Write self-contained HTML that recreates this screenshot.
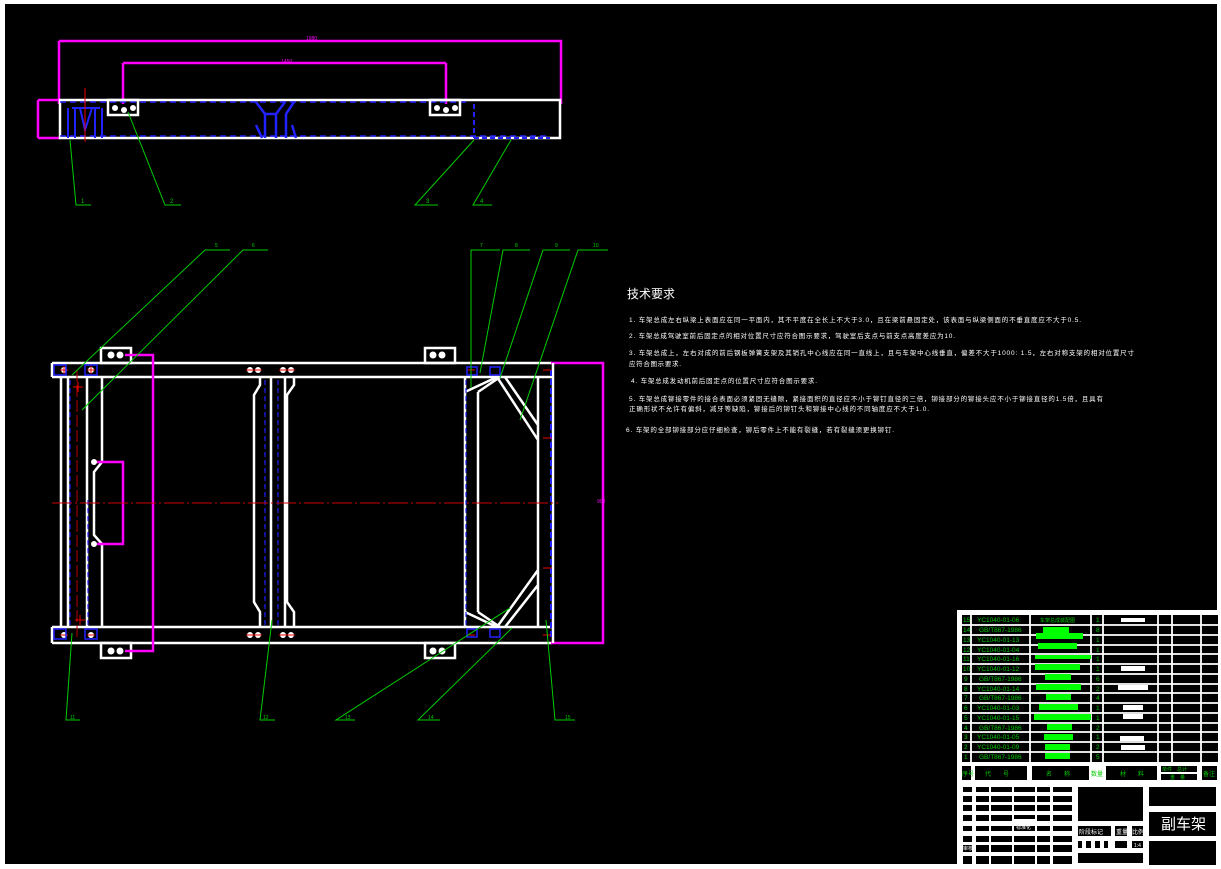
<!DOCTYPE html>
<html><head><meta charset="utf-8"><style>
html,body{margin:0;padding:0;background:#fff;}
svg{display:block}
text{font-family:"Liberation Sans","Noto Sans CJK SC",sans-serif;}
</style></head><body>
<svg width="1221" height="869" viewBox="0 0 1221 869" xmlns="http://www.w3.org/2000/svg">
<rect x="0" y="0" width="1221" height="869" fill="#fff"/>
<rect x="5" y="4" width="1212" height="860" fill="#000"/>

<!-- ===== TOP VIEW ===== -->
<g fill="none">
<path d="M59 41V104M59 41H561V104M123 63H446M123 63V104M446 63V104" stroke="#f0f" stroke-width="2.5"/>
<path d="M38 100V138M38 100H60M38 138H60" stroke="#f0f" stroke-width="2.5"/>
<text x="306" y="40" fill="#f0f" font-size="5">1980</text>
<text x="281" y="63" fill="#f0f" font-size="5">1450</text>
<rect x="60" y="100" width="500" height="38" stroke="#fff" stroke-width="2.5"/>
<line x1="60" y1="102" x2="470" y2="102" stroke="#22f" stroke-width="1.5" stroke-dasharray="6 4"/>
<line x1="60" y1="136" x2="550" y2="136" stroke="#22f" stroke-width="1.5" stroke-dasharray="6 4"/>
<rect x="108" y="100" width="30" height="15" stroke="#fff" stroke-width="2.5"/>
<rect x="430" y="100" width="30" height="15" stroke="#fff" stroke-width="2.5"/>
<circle cx="115" cy="108" r="3" fill="#fff"/><circle cx="124" cy="110" r="3" fill="#fff"/><circle cx="133" cy="108" r="3" fill="#fff"/>
<circle cx="437" cy="108" r="3" fill="#fff"/><circle cx="446" cy="110" r="3" fill="#fff"/><circle cx="455" cy="108" r="3" fill="#fff"/>
<path d="M68 108V138M75 108V138M80 108L85 130L92 108M95 108V138M102 108V138M72 108H100" stroke="#22f" stroke-width="2"/>
<path d="M256 102L265 114V138M285 102L276 114V138M265 114H276M294 102L286 114V138M262 138L256 125M296 138L292 125" stroke="#22f" stroke-width="2.5"/>
<path d="M474 104V138M474 138H550" stroke="#22f" stroke-width="2" stroke-dasharray="5 3"/>
<line x1="85" y1="88" x2="85" y2="142" stroke="#e00" stroke-width="1"/>
<path d="M70 140L76 205H91M128 112L165 205H181M474 140L415 205H438M511 140L473 205H492" stroke="#0c0" stroke-width="1"/>
<text x="81" y="203" fill="#0c0" font-size="6">1</text><text x="170" y="203" fill="#0c0" font-size="6">2</text>
<text x="426" y="203" fill="#0c0" font-size="6">3</text><text x="480" y="203" fill="#0c0" font-size="6">4</text>
</g>

<!-- ===== PLAN VIEW ===== -->
<g fill="none">
<!-- rails -->
<path d="M52 363H552M52 377H552M52 363V377M52 627H552M52 643H552M52 627V643" stroke="#fff" stroke-width="2.5"/>
<!-- left verticals -->
<path d="M61 377V627M68 377V627M87 377V627M102 377V462M102 544V627M102 462L94 472V535L102 544" stroke="#fff" stroke-width="2.5"/>
<line x1="70" y1="380" x2="70" y2="625" stroke="#22f" stroke-width="1.2" stroke-dasharray="5 3"/>
<line x1="88" y1="500" x2="88" y2="625" stroke="#22f" stroke-width="1.2" stroke-dasharray="5 3"/>
<line x1="77" y1="370" x2="77" y2="640" stroke="#b00" stroke-width="1" stroke-dasharray="12 3"/>
<!-- brackets -->
<rect x="101" y="348" width="30" height="15" stroke="#fff" stroke-width="2.5"/>
<rect x="101" y="643" width="30" height="15" stroke="#fff" stroke-width="2.5"/>
<circle cx="111" cy="355" r="3.5" fill="#fff"/><circle cx="120" cy="355" r="3.5" fill="#fff"/>
<circle cx="111" cy="651" r="3.5" fill="#fff"/><circle cx="120" cy="651" r="3.5" fill="#fff"/>
<!-- magenta -->
<path d="M125 355H153V651H125M94 462H123V544H94" stroke="#f0f" stroke-width="2.5"/>
<path d="M551 363H603V643H551" stroke="#f0f" stroke-width="2.5"/>
<text x="597" y="503" fill="#f0f" font-size="5">900</text>
<!-- middle cross member -->
<path d="M260 377V385L254 395V602L260 612V627M271 377V627M285 377V627M294 377V385L287 395V602L294 612V627" stroke="#fff" stroke-width="2.5"/>
<line x1="265" y1="380" x2="265" y2="625" stroke="#22f" stroke-width="1.2" stroke-dasharray="5 3"/>
<line x1="278" y1="380" x2="278" y2="625" stroke="#22f" stroke-width="1.2" stroke-dasharray="5 3"/>
<!-- right section -->
<path d="M465 377V627M478 392V612M538 377V627M553 363V643M465 392L497 377M478 392L500 377M497 377L538 440M505 377L538 425M465 612L497 627M478 612L500 627M497 627L538 570M505 627L538 585" stroke="#fff" stroke-width="2.5"/>
<line x1="466" y1="380" x2="466" y2="625" stroke="#22f" stroke-width="1.2" stroke-dasharray="5 3"/>
<line x1="551" y1="370" x2="551" y2="640" stroke="#22f" stroke-width="2" stroke-dasharray="6 3"/>
<!-- centerline -->
<line x1="52" y1="503" x2="558" y2="503" stroke="#c00" stroke-width="1" stroke-dasharray="20 3 2 3"/>
<!-- bolt holes -->
<g fill="#fff">
<circle cx="64" cy="370" r="3"/><circle cx="91" cy="370" r="3"/><circle cx="250" cy="370" r="3"/><circle cx="258" cy="370" r="3"/><circle cx="283" cy="370" r="3"/><circle cx="291" cy="370" r="3"/>
<circle cx="64" cy="635" r="3"/><circle cx="91" cy="635" r="3"/><circle cx="250" cy="635" r="3"/><circle cx="258" cy="635" r="3"/><circle cx="283" cy="635" r="3"/><circle cx="291" cy="635" r="3"/>
<circle cx="94" cy="462" r="3"/><circle cx="94" cy="544" r="3"/>
<circle cx="433" cy="355" r="3.5"/><circle cx="442" cy="355" r="3.5"/><circle cx="433" cy="651" r="3.5"/><circle cx="442" cy="651" r="3.5"/>
</g>
<rect x="425" y="348" width="30" height="15" stroke="#fff" stroke-width="2.5"/>
<rect x="425" y="643" width="30" height="15" stroke="#fff" stroke-width="2.5"/>
<g stroke="#e00" stroke-width="1">
<path d="M60 370H68M64 366V374M87 370H95M91 366V374M246 370H262M279 370H295M60 635H68M87 635H95M246 635H262M279 635H295M73 387H83M78 382V392M75 620H85M80 615V625M467 370H475M471 366V374M543 370H551M543 438H552M543 568H552M467 635H475M543 635H551"/>
</g>
<g stroke="#22f" stroke-width="1.5">
<rect x="54" y="365" width="12" height="10"/><rect x="85" y="365" width="12" height="10"/><rect x="54" y="629" width="12" height="10"/><rect x="85" y="629" width="12" height="10"/>
<rect x="467" y="367" width="10" height="8"/><rect x="490" y="367" width="10" height="8"/><rect x="467" y="629" width="10" height="8"/><rect x="490" y="629" width="10" height="8"/>
</g>
<!-- leaders -->
<path d="M72 375L205 250H230M82 410L243 250H268M471 388V250H500M480 373L503 250H530M500 378L543 250H570M520 420L578 250H608" stroke="#0c0" stroke-width="1"/>
<path d="M72 633L66 720H80M272 620L260 720H275M510 608L336 720H355M512 628L418 720H440M546 620L555 720H575" stroke="#0c0" stroke-width="1"/>
<g fill="#0c0" font-size="5"><text x="215" y="247">5</text><text x="252" y="247">6</text><text x="480" y="247">7</text><text x="515" y="247">8</text><text x="555" y="247">9</text><text x="593" y="247">10</text>
<text x="70" y="719">11</text><text x="263" y="719">12</text><text x="345" y="719">13</text><text x="428" y="719">14</text><text x="565" y="719">15</text></g>
</g>

<!-- ===== TECH REQUIREMENTS ===== -->
<g fill="#fff">
<text x="627" y="298" font-size="12" textLength="48">技术要求</text>
<g font-size="6.5">
<text x="629" y="322" textLength="452">1. 车架总成左右纵梁上表面应在同一平面内，其不平度在全长上不大于3.0，且在梁前悬固定处，该表面与纵梁侧面的不垂直度应不大于0.5.</text>
<text x="629" y="338" textLength="326">2. 车架总成驾驶室前后固定点的相对位置尺寸应符合图示要求，驾驶室后支点与前支点高度差应为10.</text>
<text x="629" y="355" textLength="505">3. 车架总成上，左右对成的前后钢板弹簧支架及其销孔中心线应在同一直线上，且与车架中心线垂直，偏差不大于1000: 1.5，左右对称支架的相对位置尺寸</text>
<text x="629" y="366" textLength="52">应符合图示要求.</text>
<text x="631" y="383" textLength="186">4. 车架总成发动机前后固定点的位置尺寸应符合图示要求.</text>
<text x="629" y="401" textLength="474">5. 车架总成铆接零件的接合表面必须紧固无缝隙，紧接面积的直径应不小于铆钉直径的三倍，铆接部分的铆接头应不小于铆接直径的1.5倍，且具有</text>
<text x="629" y="411" textLength="300">正确形状不允许有偏斜，减牙等缺陷，铆接后的铆钉头和铆接中心线的不同轴度应不大于1.0.</text>
<text x="626" y="432" textLength="268">6. 车架的全部铆接部分应仔细检查，铆后零件上不能有裂缝，若有裂缝须更换铆钉.</text>
</g></g>

<!-- ===== TITLE BLOCK ===== -->
<rect x="957" y="610" width="264" height="259" fill="#fff"/>
<rect x="962" y="615" width="256" height="147" fill="#000"/>
<g stroke="#fff" stroke-width="1.8">
<path d="M971 615V762M1030 615V762M1091 615V762M1103 615V762M1158 615V762M1172 615V762M1201 615V762"/>
<path d="M962 625H1218M962 635H1218M962 645H1218M962 654H1218M962 664H1218M962 674H1218M962 684H1218M962 693H1218M962 703H1218M962 713H1218M962 723H1218M962 732H1218M962 742H1218M962 752H1218"/>
</g>
<g fill="#0c0" font-size="6.5">
<text x="963" y="622">15</text><text x="977" y="622">YC1040-01-06</text><text x="1040" y="622" font-size="5">车架总成装配图</text><text x="1096" y="622">1</text>
<text x="963" y="632">14</text><text x="979" y="632">GB/T867-1986</text><text x="1096" y="632">8</text>
<text x="963" y="642">13</text><text x="977" y="642">YC1040-01-13</text><text x="1096" y="642">1</text>
<text x="963" y="652">12</text><text x="977" y="652">YC1040-01-04</text><text x="1096" y="652">1</text>
<text x="963" y="661">11</text><text x="977" y="661">YC1040-01-16</text><text x="1096" y="661">1</text>
<text x="963" y="671">10</text><text x="977" y="671">YC1040-01-12</text><text x="1096" y="671">1</text>
<text x="964" y="681">9</text><text x="979" y="681">GB/T867-1986</text><text x="1096" y="681">6</text>
<text x="964" y="691">8</text><text x="977" y="691">YC1040-01-14</text><text x="1096" y="691">2</text>
<text x="964" y="700">7</text><text x="979" y="700">GB/T867-1986</text><text x="1096" y="700">4</text>
<text x="964" y="710">6</text><text x="977" y="710">YC1040-01-03</text><text x="1096" y="710">1</text>
<text x="964" y="720">5</text><text x="977" y="720">YC1040-01-15</text><text x="1096" y="720">1</text>
<text x="964" y="730">4</text><text x="979" y="730">GB/T867-1986</text><text x="1096" y="730">2</text>
<text x="964" y="739">3</text><text x="977" y="739">YC1040-01-05</text><text x="1096" y="739">1</text>
<text x="964" y="749">2</text><text x="977" y="749">YC1040-01-09</text><text x="1096" y="749">2</text>
<text x="964" y="759">1</text><text x="979" y="759">GB/T867-1986</text><text x="1096" y="759">5</text>
</g>
<g fill="#0f0">
<rect x="1043" y="627" width="26" height="6"/><rect x="1036" y="633" width="47" height="6"/><rect x="1038" y="643" width="39" height="6"/>
<rect x="1035" y="655" width="56" height="4"/><rect x="1035" y="664" width="45" height="6"/><rect x="1045" y="674" width="26" height="6"/>
<rect x="1036" y="684" width="45" height="6"/><rect x="1046" y="694" width="25" height="6"/><rect x="1039" y="704" width="39" height="6"/>
<rect x="1034" y="714" width="57" height="6"/><rect x="1047" y="724" width="25" height="6"/><rect x="1044" y="734" width="29" height="6"/>
<rect x="1045" y="744" width="25" height="6"/><rect x="1045" y="753" width="25" height="6"/>
</g>
<g fill="#fff">
<rect x="1121" y="618" width="24" height="4"/><rect x="1121" y="666" width="24" height="5"/><rect x="1118" y="685" width="30" height="5"/>
<rect x="1123" y="705" width="20" height="5"/><rect x="1123" y="714" width="20" height="5"/><rect x="1120" y="736" width="24" height="5"/><rect x="1121" y="745" width="24" height="5"/>
</g>
<!-- header row -->
<g fill="#000">
<rect x="962" y="766" width="9" height="14"/><rect x="975" y="766" width="52" height="14"/><rect x="1032" y="766" width="57" height="14"/>
<rect x="1106" y="766" width="51" height="14"/><rect x="1161" y="766" width="36" height="6"/><rect x="1161" y="774" width="36" height="6"/><rect x="1202" y="766" width="15" height="14"/>
</g>
<g fill="#0c0" font-size="6"><text x="962" y="776">序号</text><text x="985" y="776">代　　号</text><text x="1046" y="776">名　　称</text><text x="1091" y="776">数量</text><text x="1120" y="776">材　　料</text><text x="1162" y="771" font-size="5">单件　总计</text><text x="1170" y="779" font-size="5">重　量</text><text x="1203" y="776">备注</text></g>
<!-- lower block -->
<g fill="#000">
<rect x="963" y="787" width="9" height="5"/><rect x="976" y="787" width="13" height="5"/><rect x="991" y="787" width="21" height="5"/><rect x="1014" y="787" width="21" height="5"/><rect x="1037" y="787" width="13" height="5"/><rect x="1053" y="787" width="19" height="5"/>
<rect x="963" y="796" width="9" height="6"/><rect x="976" y="796" width="13" height="6"/><rect x="991" y="796" width="21" height="6"/><rect x="1014" y="796" width="21" height="6"/><rect x="1037" y="796" width="13" height="6"/><rect x="1053" y="796" width="19" height="6"/>
<rect x="963" y="805" width="9" height="6"/><rect x="976" y="805" width="13" height="6"/><rect x="991" y="805" width="21" height="6"/><rect x="1014" y="805" width="21" height="6"/><rect x="1037" y="805" width="13" height="6"/><rect x="1053" y="805" width="19" height="6"/>
<rect x="963" y="815" width="9" height="6"/><rect x="976" y="815" width="13" height="6"/><rect x="991" y="815" width="21" height="6"/><rect x="1014" y="815" width="21" height="4"/><rect x="1037" y="815" width="13" height="6"/><rect x="1053" y="815" width="19" height="6"/>
<rect x="963" y="826" width="9" height="5"/><rect x="976" y="826" width="13" height="5"/><rect x="991" y="826" width="21" height="5"/><rect x="1014" y="826" width="21" height="5"/><rect x="1037" y="826" width="13" height="5"/><rect x="1053" y="826" width="19" height="5"/>
<rect x="963" y="836" width="9" height="6"/><rect x="976" y="836" width="13" height="6"/><rect x="991" y="836" width="21" height="6"/><rect x="1014" y="836" width="21" height="6"/><rect x="1037" y="836" width="13" height="6"/><rect x="1053" y="836" width="19" height="6"/>
<rect x="963" y="845" width="9" height="7"/><rect x="976" y="845" width="13" height="7"/><rect x="991" y="845" width="21" height="7"/><rect x="1014" y="845" width="21" height="7"/><rect x="1037" y="845" width="13" height="7"/><rect x="1053" y="845" width="19" height="7"/>
<rect x="963" y="856" width="9" height="8"/><rect x="976" y="856" width="13" height="8"/><rect x="991" y="856" width="21" height="8"/><rect x="1014" y="856" width="21" height="8"/><rect x="1037" y="856" width="13" height="8"/><rect x="1053" y="856" width="19" height="8"/>
<rect x="1078" y="787" width="65" height="34"/>
<rect x="1078" y="826" width="33" height="10"/><rect x="1115" y="826" width="12" height="10"/><rect x="1132" y="826" width="11" height="10"/>
<rect x="1078" y="841" width="4" height="7"/><rect x="1086" y="841" width="5" height="7"/><rect x="1095" y="841" width="5" height="7"/><rect x="1104" y="841" width="4" height="7"/><rect x="1115" y="841" width="12" height="7"/><rect x="1132" y="841" width="11" height="7"/>
<rect x="1078" y="853" width="65" height="10"/>
<rect x="1149" y="787" width="67" height="19"/><rect x="1149" y="812" width="67" height="24"/><rect x="1149" y="841" width="67" height="24"/>
</g>
<g fill="#fff" font-size="5"><text x="1079" y="834" font-size="6">阶段标记</text><text x="1116" y="834" font-size="6">重量</text><text x="1132" y="834" font-size="6">比例</text><text x="1134" y="847">1:4</text>
<text x="1016" y="829">标准化</text><text x="963" y="850">审核</text></g>
<text x="1161" y="829" fill="#fff" font-size="15" font-family="Liberation Sans, Noto Sans CJK SC, sans-serif">副车架</text>
</svg>
</body></html>
